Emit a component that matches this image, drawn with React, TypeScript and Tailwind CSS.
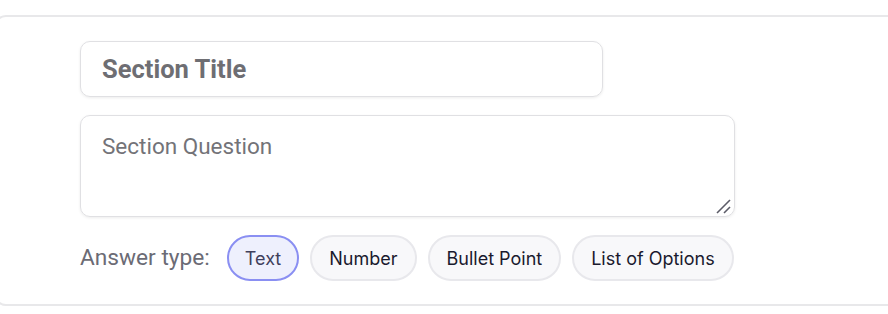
import React from "react";

export default function App() {
  const pills = [
    { label: "Text", selected: true },
    { label: "Number", selected: false },
    { label: "Bullet Point", selected: false },
    { label: "List of Options", selected: false },
  ];
  return (
    <div className="w-[888px] h-[314px] bg-white overflow-hidden pt-[15px]">
      <div className="-ml-[6px] w-[910px] h-[291px] rounded-xl border-2 border-[#e8e8ea] bg-white pl-[84px] pt-[24px]">
        <div className="flex flex-col gap-[18px]">
          <input
            className="w-[523px] h-[56px] rounded-[10px] border border-[#e0e0e3] shadow-[0_1px_3px_rgba(0,0,0,0.08)] px-[21px] text-[25.5px] font-bold text-[#6e6e73] placeholder:text-[#6e6e73] outline-none"
            style={{ fontFamily: "Roboto, sans-serif" }}
            placeholder="Section Title"
          />
          <div className="relative w-[655px] h-[102px]">
            <textarea
              className="block w-[655px] h-[102px] resize-none rounded-[10px] border border-[#e0e0e3] shadow-[0_1px_3px_rgba(0,0,0,0.08)] px-[21px] pt-[14px] text-[22.5px] text-[#6e6e73] placeholder:text-[#737378] outline-none"
              style={{ fontFamily: "Roboto, sans-serif" }}
              placeholder="Section Question"
            />
            <svg
              className="absolute left-[635px] top-[84px]"
              width="16"
              height="16"
              viewBox="0 0 16 16"
            >
              <line x1="2" y1="14" x2="15" y2="1" stroke="#5c5c68" strokeWidth="1.6" />
              <line x1="9" y1="14" x2="15" y2="8" stroke="#5c5c68" strokeWidth="1.6" />
            </svg>
          </div>
          <div className="flex items-center">
            <span
              className="text-[22.7px] text-[#6b6b75] mr-[17px]"
              style={{ fontFamily: "Roboto, sans-serif" }}
            >
              Answer type:
            </span>
            <div className="flex gap-[11px]" style={{ fontFamily: "Inter, sans-serif" }}>
              {pills.map((p) =>
                p.selected ? (
                  <button
                    key={p.label}
                    className="h-[46px] px-[16px] rounded-full border-2 border-[#8a8ff2] bg-[#eef0fd] text-[18px] text-[#3f3f5c]"
                  >
                    {p.label}
                  </button>
                ) : (
                  <button
                    key={p.label}
                    className="h-[46px] px-[17px] rounded-full border-2 border-[#e8e8ec] bg-[#f8f8fa] text-[18px] text-[#1a1a2e]"
                  >
                    {p.label}
                  </button>
                )
              )}
            </div>
          </div>
        </div>
      </div>
    </div>
  );
}
